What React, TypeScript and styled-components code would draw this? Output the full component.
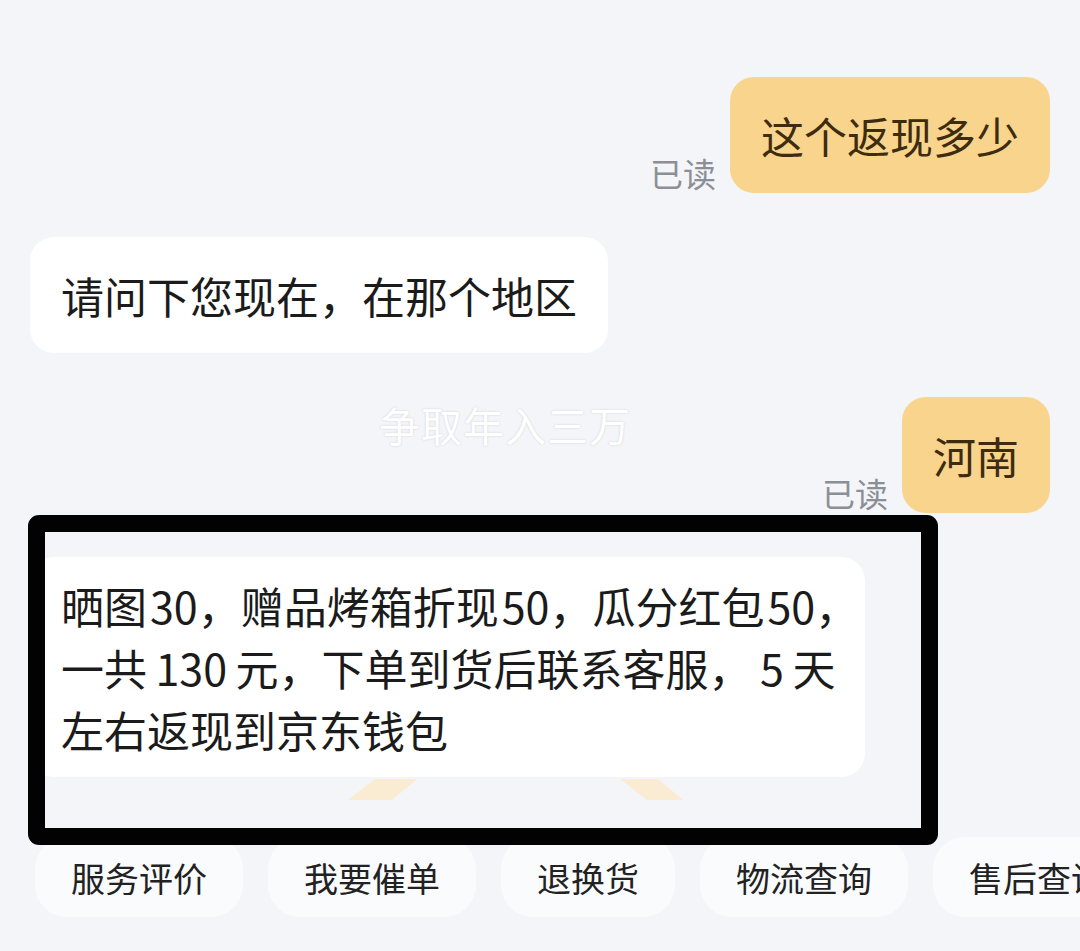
import React from "react";
import styled, { createGlobalStyle } from "styled-components";

const Global = createGlobalStyle`
  html, body {
    margin: 0;
    padding: 0;
    background: #f4f5f9;
    overflow: hidden;
  }
  body {
    font-family: "Noto Sans CJK SC", "Noto Sans", sans-serif;
  }
`;

const Page = styled.div`
  position: relative;
  width: 1080px;
  height: 951px;
  overflow: hidden;
  background: #f4f5f9;
  box-sizing: border-box;
  padding: 77px 30px 0 30px;
  display: flex;
  flex-direction: column;
`;

const Thread = styled.div`
  display: flex;
  flex-direction: column;
  gap: 44px;
`;

const Row = styled.div<{ $mine?: boolean }>`
  display: flex;
  justify-content: ${(p) => (p.$mine ? "flex-end" : "flex-start")};
  align-items: flex-end;
  gap: 14px;
`;

const ReadMark = styled.span`
  font-size: 33px;
  line-height: 33px;
  color: #8c8f95;
  margin-bottom: 3px;
`;

const Bubble = styled.div<{ $mine?: boolean; $padY?: number; $width?: number }>`
  position: relative;
  z-index: 1;
  box-sizing: border-box;
  ${(p) => (p.$width ? `width: ${p.$width}px;` : "")}
  background: ${(p) => (p.$mine ? "#f8d48d" : "#ffffff")};
  color: ${(p) => (p.$mine ? "#3e2c0f" : "#1b1b1b")};
  border-radius: 24px;
  padding: ${(p) => p.$padY ?? 27}px 31px;
  font-size: 43px;
  line-height: 62px;
  white-space: nowrap;
`;

const Digits = styled.span<{ $tight?: boolean }>`
  margin-left: ${(p) => (p.$tight ? 3 : 8.5)}px;
  margin-right: ${(p) => (p.$tight ? 0 : 8.5)}px;
`;

const Watermark = styled.div`
  position: absolute;
  left: 379px;
  top: 399px;
  font-size: 41px;
  line-height: 50px;
  color: #ffffff;
  letter-spacing: 1px;
  text-shadow: 0 0 2px rgba(150, 150, 160, 0.45);
  pointer-events: none;
  z-index: 2;
`;

const Decor = styled.svg`
  position: absolute;
  left: 0;
  top: 770px;
  z-index: 0;
`;

const Annotation = styled.div`
  position: absolute;
  left: 28px;
  top: 515px;
  width: 910px;
  height: 330px;
  box-sizing: border-box;
  border: 17px solid #020203;
  border-radius: 11px;
  z-index: 5;
  pointer-events: none;
`;

const QuickBar = styled.div`
  display: flex;
  gap: 25px;
  margin-top: 60px;
  margin-left: 5px;
  white-space: nowrap;
`;

const QuickButton = styled.div`
  flex: 0 0 auto;
  height: 80px;
  padding: 0 36px;
  border-radius: 32px;
  background: #fafbfd;
  display: flex;
  align-items: center;
  font-size: 34px;
  color: #222222;
`;

const quick = ["服务评价", "我要催单", "退换货", "物流查询", "售后查询"];

export default function App() {
  return (
    <>
      <Global />
      <Page>
        <Decor width="1080" height="40" viewBox="0 0 1080 40">
          <polygon points="375,9 417,9 392,30 348,30" fill="#f9ecd2" />
          <polygon points="620,9 658,9 683,30 647,30" fill="#f9ecd2" />
        </Decor>
        <Thread>
          <Row $mine>
            <ReadMark>已读</ReadMark>
            <Bubble $mine>这个返现多少</Bubble>
          </Row>
          <Row>
            <Bubble>请问下您现在，在那个地区</Bubble>
          </Row>
          <Row $mine>
            <ReadMark>已读</ReadMark>
            <Bubble $mine>河南</Bubble>
          </Row>
          <Row>
            <Bubble $padY={17} $width={835}>
              晒图<Digits $tight>30</Digits>，赠品烤箱折现<Digits $tight>50</Digits>，瓜分红包<Digits $tight>50</Digits>，
              <br />
              一共<Digits>130</Digits>元，下单到货后联系客服，<Digits>5</Digits>天
              <br />
              左右返现到京东钱包
            </Bubble>
          </Row>
        </Thread>
        <QuickBar>
          {quick.map((q) => (
            <QuickButton key={q}>{q}</QuickButton>
          ))}
        </QuickBar>
        <Watermark>争取年入三万</Watermark>
        <Annotation />
      </Page>
    </>
  );
}
